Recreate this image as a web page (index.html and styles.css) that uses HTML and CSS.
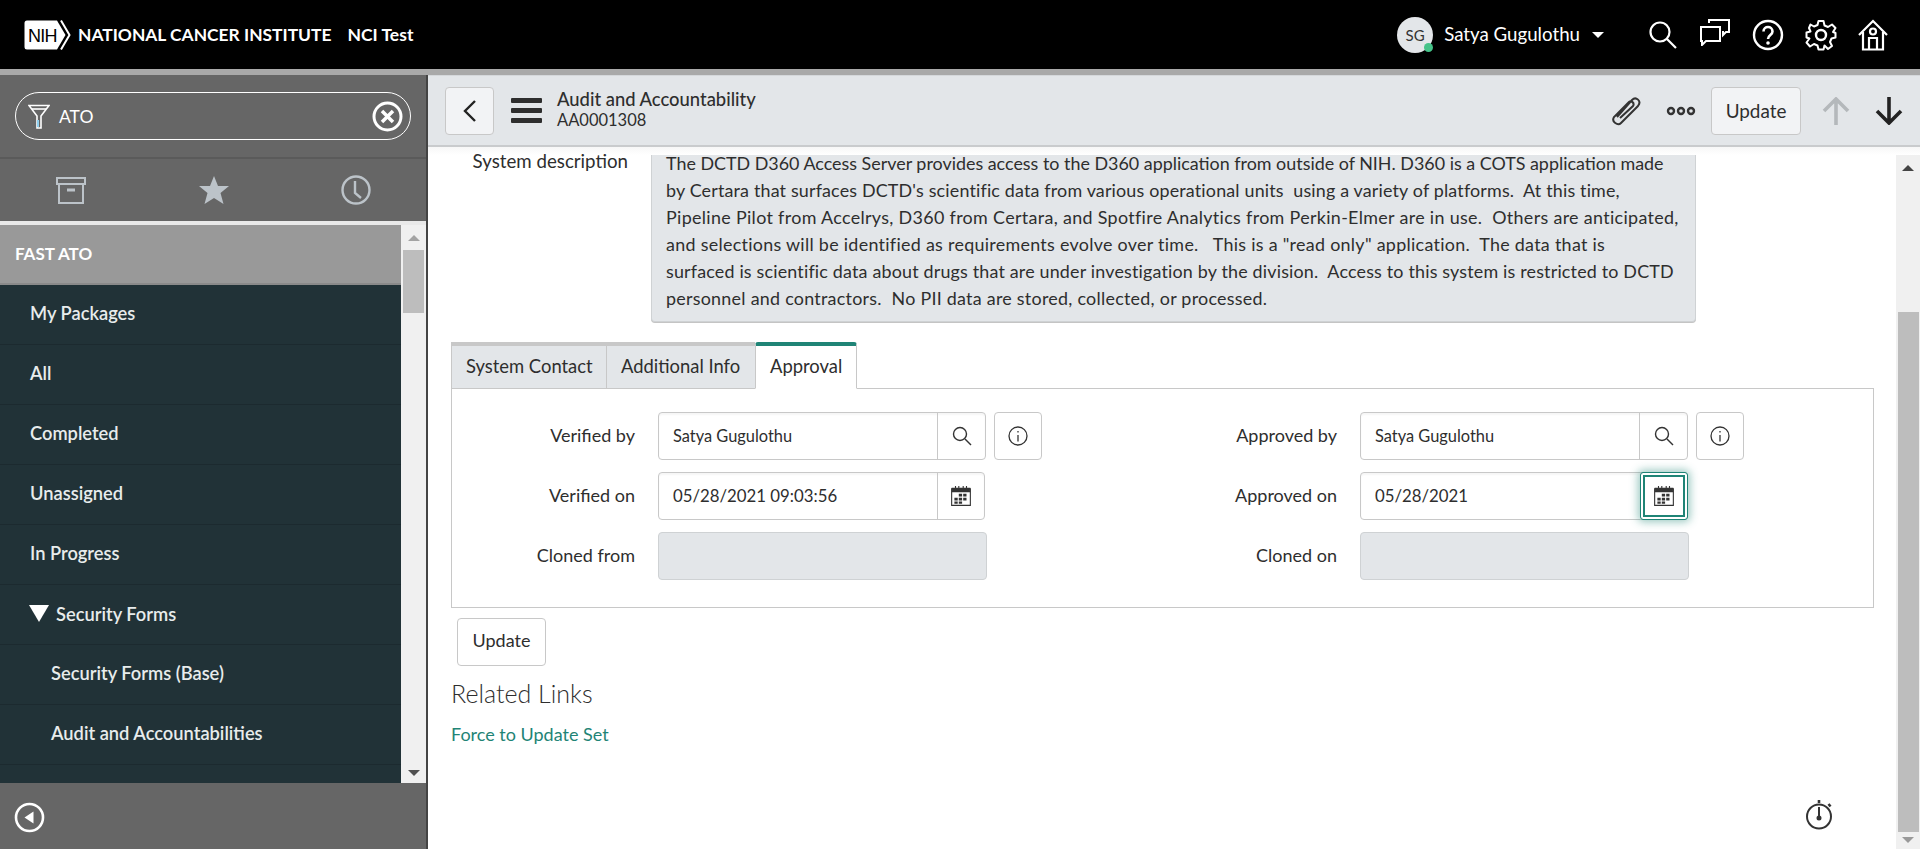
FILE: index.html
```html
<!DOCTYPE html>
<html lang="en">
<head>
  <meta charset="UTF-8">
  <title>Audit and Accountability</title>
  <link rel="stylesheet" href="styles.css">
</head>
<body>
  <header class="topbar">
    <div class="brand">
      <svg class="nih-logo" width="48" height="30" viewBox="0 0 48 30">
        <path d="M3 0.5H33L41.5 15L33 29.5H3Q0.5 29.5 0.5 27V3Q0.5 0.5 3 0.5Z" fill="#fff"/>
        <path d="M37 0.5L45.5 15L37 29.5" fill="none" stroke="#fff" stroke-width="2"/>
        <text x="4" y="21.5" class="nih-text">NIH</text>
      </svg>
      <span class="brand-name">NATIONAL CANCER INSTITUTE</span>
      <span class="brand-env">NCI Test</span>
    </div>
    <div class="user">
      <div class="avatar">SG<span class="presence"></span></div>
      <span class="user-name">Satya Gugulothu</span>
      <span class="caret"></span>
    </div>
    <div class="top-icons">
      <svg width="30" height="30" viewBox="0 0 30 30" fill="none" stroke="#fff" stroke-width="2.2"><circle cx="12" cy="12" r="9.5"/><path d="M19 19L28 28"/></svg>
      <svg class="chat-icon" width="32" height="28" viewBox="0 0 32 28" fill="none" stroke="#fff" stroke-width="2"><path d="M2 9H21V23H7L3 27V23H2Z"/><path d="M10 5V2H30V14H27L24 17V13"/></svg>
      <svg width="32" height="32" viewBox="0 0 32 32"><circle cx="16" cy="16" r="14" fill="none" stroke="#fff" stroke-width="2.4"/><path d="M11.5 12.5C11.5 6.5 20.5 6.5 20.5 12.5C20.5 16 16 16 16 20" fill="none" stroke="#fff" stroke-width="2.6"/><circle cx="16" cy="24" r="1.8" fill="#fff"/></svg>
      <svg width="32" height="32" viewBox="0 0 32 32"><circle cx="16" cy="16" r="5" fill="none" stroke="#fff" stroke-width="2.4"/><path d="M13.5 2H18.5L19.5 6.5L23 8L27 5.5L30.5 9L28 13L29.5 13.5L30.5 14V18.5L26.5 19.5L25 23L27 27L23 30L19.5 26.5L18.5 30.5H13.5L12.5 26.5L9 25L5 27.5L1.5 23.5L4.5 19.5L1.5 18.5V13.5L5.5 12.5L4 9L5.5 5.5L9 7.5L12.5 6Z" fill="none" stroke="#fff" stroke-width="2" stroke-linejoin="round"/></svg>
      <svg width="30" height="32" viewBox="0 0 30 32" fill="none" stroke="#fff" stroke-width="2.2"><path d="M1 16L15 2L29 16"/><path d="M5 13V30.5H25V13"/><circle cx="15" cy="12.5" r="3"/><path d="M11 30V19H19V30"/></svg>
    </div>
  </header>
  <div class="strip"></div>

  <div class="layout">
    <aside class="sidebar">
      <div class="filter-wrap">
        <div class="filter">
          <svg width="22" height="25" viewBox="0 0 22 25" fill="none" stroke="#fff" stroke-width="1.6"><path d="M1 1.5H21L13 12V24H9V12Z"/><path d="M4 5H18"/><path d="M10 16V23" stroke="#8fd0f0" stroke-width="2"/></svg>
          <span class="filter-text">ATO</span>
          <svg class="filter-clear" width="31" height="31" viewBox="0 0 31 31"><circle cx="15.5" cy="15.5" r="13.5" fill="none" stroke="#fff" stroke-width="3"/><path d="M10 10L21 21M21 10L10 21" stroke="#fff" stroke-width="3.5"/></svg>
        </div>
      </div>
      <div class="side-tabs">
        <svg width="30" height="30" viewBox="0 0 30 30" fill="none" stroke="#bcc3c9" stroke-width="2"><path d="M1 3H29V9H1Z"/><path d="M3 9V28H27V9"/><path d="M11 15H19" stroke-width="3"/></svg>
        <svg width="30" height="30" viewBox="0 0 30 30" fill="#bcc3c9"><path d="M15 1L19 11H30L21.5 18L24.5 29L15 23L5.5 29L8.5 18L0 11H11Z"/></svg>
        <svg width="30" height="30" viewBox="0 0 30 30" fill="none" stroke="#bcc3c9" stroke-width="2.4"><circle cx="15" cy="15" r="13.5"/><path d="M14 6V18L20 23"/></svg>
      </div>
      <div class="side-gap"></div>
      <div class="nav-area">
        <nav class="nav">
          <div class="nav-head">FAST ATO</div>
          <div class="nav-item">My Packages</div>
          <div class="nav-item">All</div>
          <div class="nav-item">Completed</div>
          <div class="nav-item">Unassigned</div>
          <div class="nav-item">In Progress</div>
          <div class="nav-item nav-open"><span class="nav-arrow"></span>Security Forms</div>
          <div class="nav-item nav-sub">Security Forms (Base)</div>
          <div class="nav-item nav-sub">Audit and Accountabilities</div>
          <div class="nav-item"></div>
        </nav>
        <div class="scrollbar side-scroll">
          <span class="arrow-up"></span>
          <div class="thumb"></div>
          <span class="arrow-down"></span>
        </div>
      </div>
      <div class="side-foot">
        <svg width="31" height="31" viewBox="0 0 31 31"><circle cx="15.5" cy="15.5" r="13.5" fill="none" stroke="#fff" stroke-width="2.6"/><path d="M19.5 9.5V21.5L10.5 15.5Z" fill="#fff"/></svg>
      </div>
    </aside>

    <main class="main">
      <div class="form-bar">
        <button class="btn back-btn">
          <svg width="14" height="24" viewBox="0 0 14 24" fill="none" stroke="#222" stroke-width="2.4"><path d="M12 2L2 12L12 22"/></svg>
        </button>
        <div class="burger"><span></span><span></span><span></span></div>
        <div class="form-title">
          <div class="title-main">Audit and Accountability</div>
          <div class="title-sub">AA0001308</div>
        </div>
        <div class="bar-right">
          <svg width="32" height="30" viewBox="0 0 32 30" fill="none" stroke="#333" stroke-width="2"><path d="M8 21L23 4C27 0 33 5 29 10L12 27C9 30 2 26 5 21L20 6C22 4 26 7 24 10L11 22"/></svg>
          <svg class="more" width="30" height="10" viewBox="0 0 30 10" fill="none" stroke="#333" stroke-width="2.4"><circle cx="5" cy="5" r="3"/><circle cx="15" cy="5" r="3"/><circle cx="25" cy="5" r="3"/></svg>
          <button class="btn bar-update">Update</button>
          <svg class="nav-up" width="28" height="28" viewBox="0 0 28 28" fill="none" stroke="#b4b8bb" stroke-width="3.6"><path d="M14 28V2M2 14L14 2L26 14"/></svg>
          <svg class="nav-down" width="28" height="28" viewBox="0 0 28 28" fill="none" stroke="#222" stroke-width="3.6"><path d="M14 0V26M2 14L14 26L26 14"/></svg>
        </div>
      </div>

      <div class="content">
        <div class="form-body">
          <div class="desc-row">
            <div class="desc-label">System description</div>
            <div class="desc-box">
              <div class="desc-text">
                <div class="line">The DCTD D360 Access Server provides access to the D360 application from outside of NIH. D360 is a COTS application made</div>
                <div class="line line-2">by Certara that surfaces DCTD's scientific data from various operational units&nbsp; using a variety of platforms.&nbsp; At this time,</div>
                <div class="line line-3">Pipeline Pilot from Accelrys, D360 from Certara, and Spotfire Analytics from Perkin-Elmer are in use.&nbsp; Others are anticipated,</div>
                <div class="line line-4">and selections will be identified as requirements evolve over time. &nbsp; This is a "read only" application.&nbsp; The data that is</div>
                <div class="line line-5">surfaced is scientific data about drugs that are under investigation by the division.&nbsp; Access to this system is restricted to DCTD</div>
                <div class="line line-6">personnel and contractors.&nbsp; No PII data are stored, collected, or processed.</div>
              </div>
            </div>
          </div>

          <div class="tabs">
            <div class="tab">System Contact</div>
            <div class="tab">Additional Info</div>
            <div class="tab tab-active">Approval</div>
          </div>
          <div class="panel">
            <div class="field">
              <label>Verified by</label>
              <div class="input-group">
                <span class="input-value name-value">Satya Gugulothu</span>
                <span class="addon"><svg width="20" height="20" viewBox="0 0 20 20" fill="none" stroke="#333" stroke-width="1.4"><circle cx="8" cy="8" r="6.5"/><path d="M13 13L19 19"/></svg></span>
              </div>
              <button class="btn info-btn"><svg width="20" height="20" viewBox="0 0 20 20" fill="none" stroke="#333" stroke-width="1.3"><circle cx="10" cy="10" r="9"/><path d="M10 9V15.5"/><path d="M10 5V6.5"/></svg></button>
            </div>
            <div class="field">
              <label>Approved by</label>
              <div class="input-group">
                <span class="input-value name-value">Satya Gugulothu</span>
                <span class="addon"><svg width="20" height="20" viewBox="0 0 20 20" fill="none" stroke="#333" stroke-width="1.4"><circle cx="8" cy="8" r="6.5"/><path d="M13 13L19 19"/></svg></span>
              </div>
              <button class="btn info-btn"><svg width="20" height="20" viewBox="0 0 20 20" fill="none" stroke="#333" stroke-width="1.3"><circle cx="10" cy="10" r="9"/><path d="M10 9V15.5"/><path d="M10 5V6.5"/></svg></button>
            </div>
            <div class="field">
              <label>Verified on</label>
              <div class="input-group date-group">
                <span class="input-value">05/28/2021 09:03:56</span>
                <span class="addon"><svg width="22" height="22" viewBox="0 0 20 20"><path d="M1.5 3.5H18.5V18.5H1.5Z" fill="none" stroke="#333"/><path d="M2 3H18V6H2ZM5 1V3M8 1V3M12 1V3M15 1V3" stroke="#333" fill="#333" stroke-width="1"/><path d="M8 8H11V10.5H8ZM12 8H15V10.5H12ZM4 11.5H7V14H4ZM8 11.5H11V14H8ZM12 11.5H15V14H12ZM4 15H7V17H4ZM8 15H11V17H8Z" fill="#333"/></svg></span>
              </div>
            </div>
            <div class="field">
              <label>Approved on</label>
              <div class="input-group date-group focused">
                <span class="input-value">05/28/2021</span>
                <span class="addon"><svg width="22" height="22" viewBox="0 0 20 20"><path d="M1.5 3.5H18.5V18.5H1.5Z" fill="none" stroke="#333"/><path d="M2 3H18V6H2ZM5 1V3M8 1V3M12 1V3M15 1V3" stroke="#333" fill="#333" stroke-width="1"/><path d="M8 8H11V10.5H8ZM12 8H15V10.5H12ZM4 11.5H7V14H4ZM8 11.5H11V14H8ZM12 11.5H15V14H12ZM4 15H7V17H4ZM8 15H11V17H8Z" fill="#333"/></svg></span>
              </div>
            </div>
            <div class="field">
              <label>Cloned from</label>
              <div class="readonly"></div>
            </div>
            <div class="field">
              <label>Cloned on</label>
              <div class="readonly"></div>
            </div>
          </div>

          <button class="btn form-update">Update</button>
          <h2 class="related">Related Links</h2>
          <a class="link" href="#">Force to Update Set</a>
          <div class="timer">
            <svg width="28" height="31" viewBox="0 0 28 31" fill="none" stroke="#333" stroke-width="2"><circle cx="13" cy="17.5" r="12"/><path d="M13 1V4" stroke-width="2.6"/><path d="M22.5 5L24.5 7.5" stroke-width="2.6"/><path d="M13 8V19"/><circle cx="13" cy="19" r="1.5" fill="#333"/></svg>
          </div>
        </div>
        <div class="scrollbar main-scroll">
          <span class="arrow-up"></span>
          <div class="thumb"></div>
          <span class="arrow-down"></span>
        </div>
      </div>
    </main>
  </div>
</body>
</html>
```

FILE: styles.css
```css
* {
  box-sizing: border-box;
}
html, body {
  height: 100%;
}
body {
  margin: 0;
  overflow: hidden;
  display: flex;
  flex-direction: column;
  font-family: Lato, "Open Sans", sans-serif;
  font-size: 18px;
  color: #2e2e2e;
  background: #fff;
}
svg {
  display: block;
}

/* top bar */
.topbar {
  height: 69px;
  background: #000;
  color: #fff;
  display: flex;
  align-items: center;
  padding-left: 24px;
}
.brand {
  display: flex;
  align-items: center;
  flex: 1;
}
.nih-text {
  font-family: "Liberation Sans", sans-serif;
  font-size: 18px;
  letter-spacing: -0.8px;
  fill: #000;
}
.brand-name {
  margin-left: 6px;
  font-size: 17.4px;
  font-weight: 700;
  white-space: nowrap;
}
.brand-env {
  margin-left: 16px;
  font-size: 17.5px;
  font-weight: 700;
}
.user {
  display: flex;
  align-items: center;
}
.avatar {
  position: relative;
  width: 36px;
  height: 36px;
  border-radius: 50%;
  background: #e3e6e9;
  color: #333;
  font-size: 15px;
  display: flex;
  align-items: center;
  justify-content: center;
}
.presence {
  position: absolute;
  right: 0;
  bottom: 1px;
  width: 9px;
  height: 9px;
  border-radius: 50%;
  background: #45c389;
}
.user-name {
  margin-left: 11px;
  font-size: 18.7px;
  padding-bottom: 2px;
}
.caret {
  margin-left: 12px;
  border-left: 6px solid transparent;
  border-right: 6px solid transparent;
  border-top: 6px solid #fff;
}
.top-icons {
  display: flex;
  align-items: center;
  gap: 21px;
  margin-left: 44px;
  margin-right: 32px;
}
.chat-icon {
  margin-bottom: 5px;
}
.strip {
  height: 6px;
  background: #a9a9a9;
}

/* layout */
.layout {
  flex: 1;
  display: flex;
  min-height: 0;
}
.sidebar {
  width: 428px;
  display: flex;
  flex-direction: column;
  background: #666;
  border-right: 2px solid #444;
}
.filter-wrap {
  height: 84px;
  padding: 17px 15px 0 15px;
  border-bottom: 2px solid #5a5a5a;
}
.filter {
  height: 48px;
  border: 1px solid #fff;
  border-radius: 24px;
  display: flex;
  align-items: center;
  padding: 0 7px 0 12px;
  color: #fff;
}
.filter-text {
  margin-left: 9px;
  flex: 1;
  font-size: 17.5px;
}
.side-tabs {
  height: 62px;
  display: flex;
  align-items: center;
  justify-content: space-between;
  padding: 0 55px 0 56px;
}
.side-gap {
  height: 4px;
  background: #e9e9e9;
}
.nav-area {
  flex: 1;
  display: flex;
  min-height: 0;
}
.nav {
  flex: 1;
  overflow: hidden;
  background: #213237;
}
.nav-head {
  height: 60px;
  padding: 0 0 2px 15px;
  display: flex;
  align-items: center;
  background: #999;
  border-bottom: 2px solid #8a8a8a;
  color: #fff;
  font-weight: 700;
  font-size: 17px;
}
.nav-item {
  height: 60px;
  padding: 0 0 4px 30px;
  display: flex;
  align-items: center;
  border-bottom: 1px solid #1c2a2f;
  color: #e8ecec;
  font-weight: 600;
  font-size: 18.3px;
}
.nav-sub {
  padding-left: 51px;
}
.nav-open {
  padding-left: 29px;
  padding-bottom: 2px;
}
.nav-arrow {
  margin-right: 7px;
  border-left: 10px solid transparent;
  border-right: 10px solid transparent;
  border-top: 17px solid #fff;
}
.side-foot {
  height: 66px;
  padding: 19px 0 0 14px;
}

/* scrollbars */
.scrollbar {
  display: flex;
  flex-direction: column;
  align-items: center;
  background: #f0f0f0;
}
.thumb {
  background: #bdbdbd;
}
.arrow-up,
.arrow-down {
  flex: none;
  border-left: 6px solid transparent;
  border-right: 6px solid transparent;
}
.arrow-up {
  border-bottom: 6px solid #a3a3a3;
}
.arrow-down {
  margin-top: auto;
  border-top: 6px solid #505050;
}
.side-scroll {
  width: 25px;
  padding: 10px 0 7px;
}
.side-scroll .thumb {
  width: 21px;
  height: 63px;
  margin-top: 9px;
}
.main-scroll {
  width: 24px;
  padding: 10px 0 3px;
}
.main-scroll .arrow-up {
  border-bottom-color: #444;
}
.main-scroll .arrow-down {
  border-top-color: #999;
  margin-top: 5px;
}
.main-scroll .thumb {
  width: 21px;
  height: 520px;
  margin-top: 141px;
}

/* buttons */
.btn {
  font: inherit;
  color: inherit;
  background: #fff;
  border: 1px solid #c8c8c8;
  border-radius: 4px;
  padding: 0;
  display: flex;
  align-items: center;
  justify-content: center;
}

/* form header */
.main {
  flex: 1;
  min-width: 0;
  display: flex;
  flex-direction: column;
}
.form-bar {
  height: 72px;
  flex: none;
  display: flex;
  align-items: center;
  padding-left: 17px;
  background: #e3e6e9;
  border-top: 1px solid #d5d8db;
  border-bottom: 2px solid #c9cbcd;
}
.back-btn {
  width: 49px;
  height: 48px;
  background: #f2f3f5;
}
.burger {
  margin-left: 17px;
  width: 31px;
  display: flex;
  flex-direction: column;
  gap: 5px;
}
.burger span {
  height: 5px;
  border-radius: 1px;
  background: #2e2e2e;
}
.form-title {
  margin-left: 15px;
  padding-bottom: 2px;
  line-height: 20px;
}
.title-main {
  font-weight: 500;
  font-size: 18.4px;
}
.title-sub {
  margin-top: 1px;
  font-size: 16.5px;
}
.bar-right {
  margin-left: auto;
  display: flex;
  align-items: center;
  padding-right: 17px;
}
.more {
  margin-left: 25px;
}
.bar-update {
  margin-left: 15px;
  width: 90px;
  height: 48px;
  padding-bottom: 1px;
  background: #f2f3f5;
  font-size: 18.9px;
}
.nav-up {
  margin-left: 21px;
}
.nav-down {
  margin-left: 25px;
}

/* form body */
.content {
  flex: 1;
  min-height: 0;
  display: flex;
  padding-top: 8px;
  background: linear-gradient(#f7f7f7, #fff 8px);
}
.form-body {
  position: relative;
  flex: 1;
  min-width: 0;
  padding: 0 22px 0 23px;
}
.desc-row {
  display: flex;
  margin-left: -23px;
}
.desc-label {
  width: 200px;
  text-align: right;
  font-size: 18.7px;
  line-height: 12px;
}
.desc-box {
  margin-left: 23px;
  width: 1045px;
  height: 167px;
  padding: 0 14px;
  overflow: hidden;
  background: #e3e6e9;
  border: 1px solid #cfd2d4;
  border-top: none;
  border-radius: 0 0 4px 4px;
  box-shadow: 0 1px 0 #c4c4c4;
}
.desc-text {
  margin-top: -5px;
  font-size: 17.9px;
  line-height: 27px;
  white-space: nowrap;
}
.line-2 {
  letter-spacing: 0.17px;
}
.line-3 {
  letter-spacing: 0.33px;
}
.line-4 {
  letter-spacing: 0.29px;
}
.line-5 {
  letter-spacing: 0.18px;
}
.line-6 {
  letter-spacing: 0.26px;
}
.tabs {
  display: flex;
  margin-top: 20px;
  position: relative;
  z-index: 1;
}
.tab {
  height: 47px;
  padding: 0 14px 2px;
  display: flex;
  align-items: center;
  background: #e3e6e9;
  border-top: 4px solid #c8c8c8;
  border-left: 1px solid #c8c8c8;
  border-bottom: 1px solid #c8c8c8;
  font-size: 18.4px;
  white-space: nowrap;
}
.tab:first-child {
  width: 155px;
}
.tab:nth-child(2) {
  width: 149px;
}
.tab-active {
  width: 102px;
  background: #fff;
  border-top-color: #1f8476;
  border-right: 1px solid #c8c8c8;
  border-bottom-color: #fff;
  border-radius: 3px 3px 0 0;
}
.panel {
  margin-top: -1px;
  height: 220px;
  padding: 23px 0 0;
  border: 1px solid #c8c8c8;
  display: grid;
  grid-template-columns: 702px 1fr;
  grid-auto-rows: 48px;
  row-gap: 12px;
}
.field {
  display: flex;
  align-items: center;
}
.field label {
  width: 183px;
  margin-right: 23px;
  padding-bottom: 2px;
  text-align: right;
}
.input-group {
  width: 328px;
  height: 48px;
  display: flex;
  border: 1px solid #c8c8c8;
  border-radius: 4px;
  box-shadow: inset 0 2px 2px rgba(0, 0, 0, 0.04);
}
.input-value {
  flex: 1;
  padding: 0 0 2px 14px;
  display: flex;
  align-items: center;
  font-size: 16.8px;
}
.name-value {
  font-size: 16.4px;
}
.addon {
  width: 48px;
  display: flex;
  align-items: center;
  justify-content: center;
  border-left: 1px solid #c8c8c8;
}
.date-group {
  width: 327px;
}
.date-group .addon {
  width: 47px;
}
.date-group.focused {
  width: 328px;
}
.focused .addon {
  width: 48px;
  margin: -1px -1px -1px 0;
  border: 1px solid #1f8476;
  border-radius: 3px;
  box-shadow: inset 0 0 0 2px #fff, inset 0 0 0 4px #1f8476, 0 0 8px 2px rgba(31, 132, 118, 0.45);
}
.info-btn {
  margin-left: 8px;
  width: 48px;
  height: 48px;
}
.readonly {
  width: 329px;
  height: 48px;
  background: #e3e6e9;
  border: 1px solid #cfd2d4;
  border-radius: 4px;
}
.form-update {
  margin: 10px 0 0 6px;
  width: 89px;
  height: 48px;
  padding-bottom: 4px;
}
.related {
  margin: 12px 0 0;
  font-size: 25px;
  font-weight: 300;
  line-height: 30px;
}
.link {
  display: block;
  margin-top: 13px;
  line-height: 26px;
  color: #1f8476;
  text-decoration: none;
}
.timer {
  position: absolute;
  right: 62px;
  top: 644px;
}
```
